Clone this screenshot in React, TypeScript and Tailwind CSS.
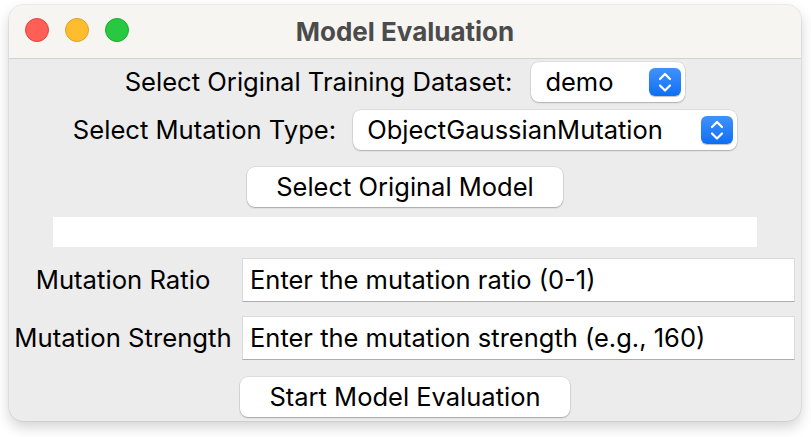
import { ReactNode } from "react";

function Stepper() {
  return (
    <div className="flex h-[28px] w-[32px] items-center justify-center rounded-[6px] bg-gradient-to-b from-[#3f92fb] to-[#0a6ff5] shadow-[0_0.5px_1px_rgba(0,0,0,0.25)]">
      <svg width="32" height="28" viewBox="0 0 32 28" fill="none">
        <path
          d="M11 11 L16 6 L21 11"
          stroke="white"
          strokeWidth="2.2"
          strokeLinecap="round"
          strokeLinejoin="round"
        />
        <path
          d="M11 17.5 L16 22.5 L21 17.5"
          stroke="white"
          strokeWidth="2.2"
          strokeLinecap="round"
          strokeLinejoin="round"
        />
      </svg>
    </div>
  );
}

function Select({ value, width }: { value: string; width: string }) {
  return (
    <div
      className={`flex h-[40px] ${width} items-center justify-between rounded-[8px] bg-white pl-[14px] pr-[4px] shadow-[0_0_0_0.5px_rgba(0,0,0,0.12),0_1px_1.5px_rgba(0,0,0,0.22)]`}
    >
      <span className="text-[25.5px] text-black">{value}</span>
      <Stepper />
    </div>
  );
}

function Button({ children, width }: { children: ReactNode; width: string }) {
  return (
    <button
      className={`flex h-[40px] ${width} items-center justify-center rounded-[8px] bg-white text-[25.5px] text-black shadow-[0_0_0_0.5px_rgba(0,0,0,0.12),0_1px_1.5px_rgba(0,0,0,0.25)]`}
    >
      {children}
    </button>
  );
}

function Field({ label, placeholder }: { label: string; placeholder: string }) {
  return (
    <>
      <span className="whitespace-nowrap text-center text-[25.7px] text-black">{label}</span>
      <div className="flex h-[44px] items-center border border-[#dadada] border-b-[#adadad] bg-white pl-[7px] text-[25.5px] text-black">
        {placeholder}
      </div>
    </>
  );
}

export default function App() {
  return (
    <div
      className="h-[437px] w-[811px] bg-white pl-[9px] pt-[5px]"
      style={{ fontFamily: "Inter, 'Noto Sans', sans-serif" }}
    >
      <div className="flex h-[416px] w-[792px] flex-col overflow-hidden rounded-[14px] bg-[#ececec] shadow-[0_0_0_0.5px_rgba(0,0,0,0.12),0_6px_14px_rgba(0,0,0,0.18)]">
        {/* Title bar */}
        <div className="relative flex h-[54px] shrink-0 items-center justify-center border-b border-[#d2d2d2] bg-[#f7f5f2]">
          <div className="absolute left-[16px] top-[13px] flex gap-[16px]">
            <span className="h-[24px] w-[24px] rounded-full border border-[#e0443e] bg-[#ff5f57]" />
            <span className="h-[24px] w-[24px] rounded-full border border-[#dea123] bg-[#febc2e]" />
            <span className="h-[24px] w-[24px] rounded-full border border-[#1aab29] bg-[#28c840]" />
          </div>
          <span className="text-[26px] font-bold text-[#4b4b4b]">Model Evaluation</span>
        </div>

        {/* Body */}
        <div className="flex flex-col items-center">
          <div className="mt-[3px] flex items-center gap-[19px]">
            <span className="text-[25.6px] text-black">Select Original Training Dataset:</span>
            <Select value="demo" width="w-[154px]" />
          </div>
          <div className="mt-[8px] flex items-center gap-[17px]">
            <span className="text-[25.6px] text-black">Select Mutation Type:</span>
            <Select value="ObjectGaussianMutation" width="w-[384px]" />
          </div>
          <div className="mt-[17px]">
            <Button width="w-[316px]">Select Original Model</Button>
          </div>
          <div className="mt-[10px] h-[30px] w-[704px] bg-white" />
          <div className="mt-[11px] grid w-full grid-cols-[218px_1fr] items-center gap-x-[10px] gap-y-[14px] pl-[5px] pr-[6px]">
            <Field label="Mutation Ratio" placeholder="Enter the mutation ratio (0-1)" />
            <Field label="Mutation Strength" placeholder="Enter the mutation strength (e.g., 160)" />
          </div>
          <div className="mt-[17px]">
            <Button width="w-[330px]">Start Model Evaluation</Button>
          </div>
        </div>
      </div>
    </div>
  );
}
